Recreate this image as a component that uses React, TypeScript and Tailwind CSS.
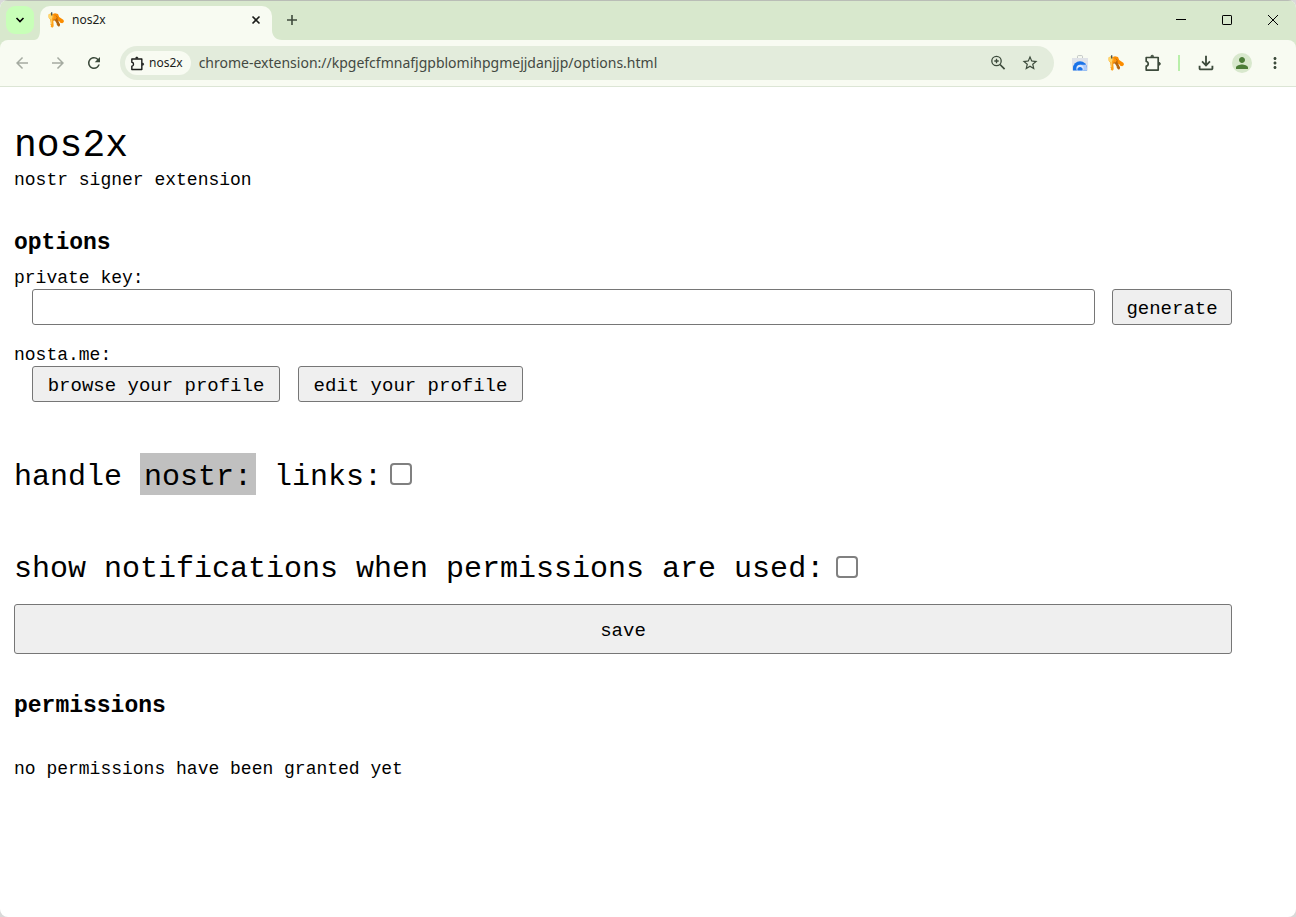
import type { ReactNode } from "react";
import { MdArrowBack, MdArrowForward, MdRefresh, MdStarBorder, MdMoreVert, MdPerson, MdOutlineFileDownload } from "react-icons/md";

const mono = "font-['Liberation_Mono',monospace]";
const field = "border border-[#767676] rounded-[3px]";

function Keys({ className }: { className: string }) {
  return (
    <svg viewBox="0 0 16 16" className={className} aria-hidden="true">
      <path d="M4 2.200 7 1.200l3 .8 1.200 3 4.400 3 .3 2-1.700 1.300-2-.5-.6-1.300-3-1.500H4z" fill="#fb8c00" />
      <path d="M4.800 4 7.800 3.400l1.800 1.800-.1 2 2.600 5.300-.4 1.700-1.500.2-1.400-1.700-.2-1.500-1.700-2.600-2.100.2z" fill="#b5650c" />
      <path d="M5 3 7.600 3.400l1 1.900-.6 1.900-3 .6z" fill="#fb9410" />
      <path d="M.6 2.600 3 1.200l2.600 1.100.6 3-1 1.900.5 7-1.300 1.500-1.700-.9.4-1.200-.7-.9.4-1.300-.7-4L.6 5.600z" fill="#ffa21a" />
      <path d="M.6 2.600 3 1.200l1.400.9.2 2.900-.9 2.200.3 5.200-.9-1.200.2-1-.7-3L.6 5.600z" fill="#ffd66a" />
      <path d="M3.700.2v3.400" stroke="#37474f" strokeWidth="1.200" />
    </svg>
  );
}

function Puzzle({ className }: { className: string }) {
  return (
    <svg viewBox="0 0 18 18" className={className} fill="none" stroke="currentColor" strokeWidth="1.700" strokeLinejoin="round" aria-hidden="true">
      <path d="M2.200 3.500h12v12.600h-12v-3.900c2.700-.3 2.700-4.400 0-4.700z" />
      <path d="M6.800 2.600a1.400 1.400 0 0 1 2.800 0zM15 8.400a1.400 1.400 0 0 1 0 2.800z" fill="currentColor" strokeWidth=".8" />
    </svg>
  );
}

function IconButton({ label, className = "", children }: { label: string; className?: string; children: ReactNode }) {
  return (
    <button type="button" aria-label={label} className={`flex shrink-0 items-center justify-center ${className}`}>
      {children}
    </button>
  );
}

function TabStrip() {
  return (
    <div className="flex h-10 items-end bg-[#d8e8cd] border-t border-[#b9bdb6] font-['Noto_Sans',sans-serif]">
      <IconButton label="Search tabs" className="mb-[6px] ml-[6px] size-7 rounded-[9px] bg-[#c8ffb8] text-black">
        <svg viewBox="0 0 10 10" className="size-[10px]" fill="none" stroke="currentColor" strokeWidth="1.600" aria-hidden="true">
          <path d="m1.500 3 3.500 3.500L8.500 3" />
        </svg>
      </IconButton>
      <svg viewBox="0 0 6 10" className="h-[10px] w-[6px]" aria-hidden="true">
        <path d="M6 0v10H0c4 0 6-4 6-10z" fill="#f8fbf2" />
      </svg>
      <div className="flex h-[34px] w-[232px] items-center rounded-t-[10px] bg-[#f8fbf2] pl-2 pr-[11px] pb-[6px]">
        <Keys className="size-4" />
        <span className="ml-2 grow text-xs text-[#1b1d1a]">nos2x</span>
        <IconButton label="Close tab" className="size-[10px] text-[#1b1d1a]">
          <svg viewBox="0 0 10 10" className="size-[10px]" stroke="currentColor" strokeWidth="1.600" aria-hidden="true">
            <path d="m1.500 1.500 7 7m0-7-7 7" />
          </svg>
        </IconButton>
      </div>
      <svg viewBox="0 0 10 10" className="size-[10px]" aria-hidden="true">
        <path d="M0 0v10h10C4 10 0 6 0 0z" fill="#f8fbf2" />
      </svg>
      <IconButton label="New tab" className="mb-[10px] size-5 text-[#3f4a3c]">
        <svg viewBox="0 0 12 12" className="size-3" stroke="currentColor" strokeWidth="1.600" aria-hidden="true">
          <path d="M6 1v10M1 6h10" />
        </svg>
      </IconButton>
      <div className="ml-auto flex h-[39px] pb-[2px] text-black">
        <IconButton label="Minimize" className="w-[46px]">
          <svg viewBox="0 0 10 10" className="size-[10px]" stroke="currentColor" aria-hidden="true"><path d="M0 4.500h10" /></svg>
        </IconButton>
        <IconButton label="Maximize" className="w-[46px]">
          <svg viewBox="0 0 10 10" className="size-[10px]" fill="none" stroke="currentColor" aria-hidden="true"><rect x=".5" y=".5" width="9" height="9" rx=".6" /></svg>
        </IconButton>
        <IconButton label="Close" className="w-[46px]">
          <svg viewBox="0 0 10 10" className="size-[10px]" stroke="currentColor" aria-hidden="true"><path d="m0 0 10 10M10 0 0 10" /></svg>
        </IconButton>
      </div>
    </div>
  );
}

function Toolbar() {
  return (
    <div className="bg-[#d8e8cd]">
      <div className="flex h-[47px] items-center rounded-t-[8px] border-b border-[#dce5d5] bg-[#f8fbf2] pl-[13px] pr-3 font-['Noto_Sans',sans-serif] text-[#3c4a3b]">
        <IconButton label="Back" className="w-[18px] text-[#a5aba1]"><MdArrowBack className="size-[18px]" /></IconButton>
        <IconButton label="Forward" className="ml-[18px] w-[18px] text-[#a5aba1]"><MdArrowForward className="size-[18px]" /></IconButton>
        <IconButton label="Reload" className="ml-[18px] w-[18px]"><MdRefresh className="size-[18px]" /></IconButton>
        <div className="ml-[17px] flex h-[34px] grow items-center rounded-full bg-[#e3ecdc] pl-[5px] pr-[15px]">
          <button type="button" className="flex h-6 items-center rounded-full bg-[#f8fbf2] pl-[5px] pr-2 text-xs text-[#1b1d1a]">
            <Puzzle className="mr-1 size-[15px]" />
            nos2x
          </button>
          <input aria-label="Address" readOnly defaultValue="chrome-extension://kpgefcfmnafjgpblomihpgmejjdanjjp/options.html" className="ml-2 min-w-0 grow bg-transparent text-sm text-[#434942] outline-none" />
          <IconButton label="Zoom" className="size-4">
            <svg viewBox="0 0 16 16" className="size-4" fill="none" stroke="currentColor" strokeWidth="1.300" aria-hidden="true">
              <circle cx="6.500" cy="6" r="4.700" />
              <path d="m10 9.500 4.600 4.600" strokeWidth="1.700" />
              <path d="M6.500 3.800v4.400M4.300 6h4.400" />
            </svg>
          </IconButton>
          <IconButton label="Bookmark" className="ml-[15px] size-[18px]"><MdStarBorder className="size-[18px]" /></IconButton>
        </div>
        <IconButton label="Chrome Web Store" className="ml-[18px] size-4">
          <svg viewBox="0 0 16 16" className="size-4" aria-hidden="true">
            <path d="M5.500 3V1.300c0-.4.3-.7.7-.7h3.600c.4 0 .7.3.7.7V3" fill="none" stroke="#c3c7c5" />
            <path d="M0 3h16v12.500H0z" fill="#dfe2e8" />
            <path d="M1 15.500v-2.300a7 7 0 0 1 14 0v2.300z" fill="#1a73e8" />
            <path d="M8 9.700h6.200c.7 1.500.9 3.500.8 5.800H10z" fill="#aecbfa" />
            <circle cx="8" cy="13.400" r="3.600" fill="#dbe7fd" />
            <path d="M5.400 15.500a2.700 2.700 0 1 1 5.200 0z" fill="#1a73e8" />
          </svg>
        </IconButton>
        <IconButton label="nos2x" className="ml-5 size-4"><Keys className="size-4" /></IconButton>
        <IconButton label="Extensions" className="ml-5 size-[18px]"><Puzzle className="size-[18px]" /></IconButton>
        <span className="ml-4 h-4 w-[2px] bg-[#b9efaa]" />
        <IconButton label="Downloads" className="ml-[15px] size-[22px]"><MdOutlineFileDownload className="size-[22px]" /></IconButton>
        <IconButton label="Profile" className="ml-[15px] size-5 rounded-full bg-[#d8e8cd] text-[#4c7d38]"><MdPerson className="size-[18px]" /></IconButton>
        <IconButton label="Menu" className="ml-[14px] size-[18px]"><MdMoreVert className="size-5" /></IconButton>
      </div>
    </div>
  );
}

const button = `${field} h-9 shrink-0 bg-[#efefef] pt-1 text-[19px] leading-7`;
const checkbox = "size-[22px] shrink-0 appearance-none rounded-[4px] border-2 border-[#808080] bg-white";

export default function App() {
  return (
    <div className="min-h-screen bg-[#d9d9d9]">
      <div className="min-h-screen overflow-hidden rounded-[8px] bg-white text-black">
        <TabStrip />
        <Toolbar />
        <main className={`${mono} pt-9 pb-10 pl-[14px] pr-16 text-[18px] leading-[22px]`}>
          <h1 className="text-[38px] leading-[46px]">nos2x</h1>
          <p>nostr signer extension</p>
          <h2 className="mt-9 text-[23px] font-bold leading-8">options</h2>
          <label htmlFor="key" className="mt-2 block">private key:</label>
          <div className="ml-[18px] flex gap-[17px]">
            <input id="key" type="text" className={`${field} h-9 min-w-0 grow bg-white px-2`} />
            <button type="button" className={`${button} w-[120px]`}>generate</button>
          </div>
          <p className="mt-[19px]">nosta.me:</p>
          <div className="ml-[18px] flex gap-[18px]">
            <button type="button" className={`${button} w-[248px]`}>browse your profile</button>
            <button type="button" className={`${button} w-[225px]`}>edit your profile</button>
          </div>
          <div className="mt-[51px] flex h-[42px] items-center text-[30px] leading-9">
            <label htmlFor="links" className="flex whitespace-pre">
              <span className="pt-[6px]">handle </span>
              <span className="bg-[#c0c0c0] px-1 pt-[6px]">nostr:</span>
              <span className="pt-[6px]"> links:</span>
            </label>
            <input id="links" type="checkbox" className={`${checkbox} ml-2`} />
          </div>
          <div className="mt-[51px] flex h-[42px] items-center text-[30px] leading-9">
            <label htmlFor="notify" className="pt-1">show notifications when permissions are used:</label>
            <input id="notify" type="checkbox" className={`${checkbox} ml-3`} />
          </div>
          <button type="button" className={`${field} mt-4 h-[50px] w-full bg-[#efefef] pt-1 text-[19px]`}>save</button>
          <h2 className="mt-9 text-[23px] font-bold leading-8">permissions</h2>
          <p className="mt-9">no permissions have been granted yet</p>
        </main>
      </div>
    </div>
  );
}
